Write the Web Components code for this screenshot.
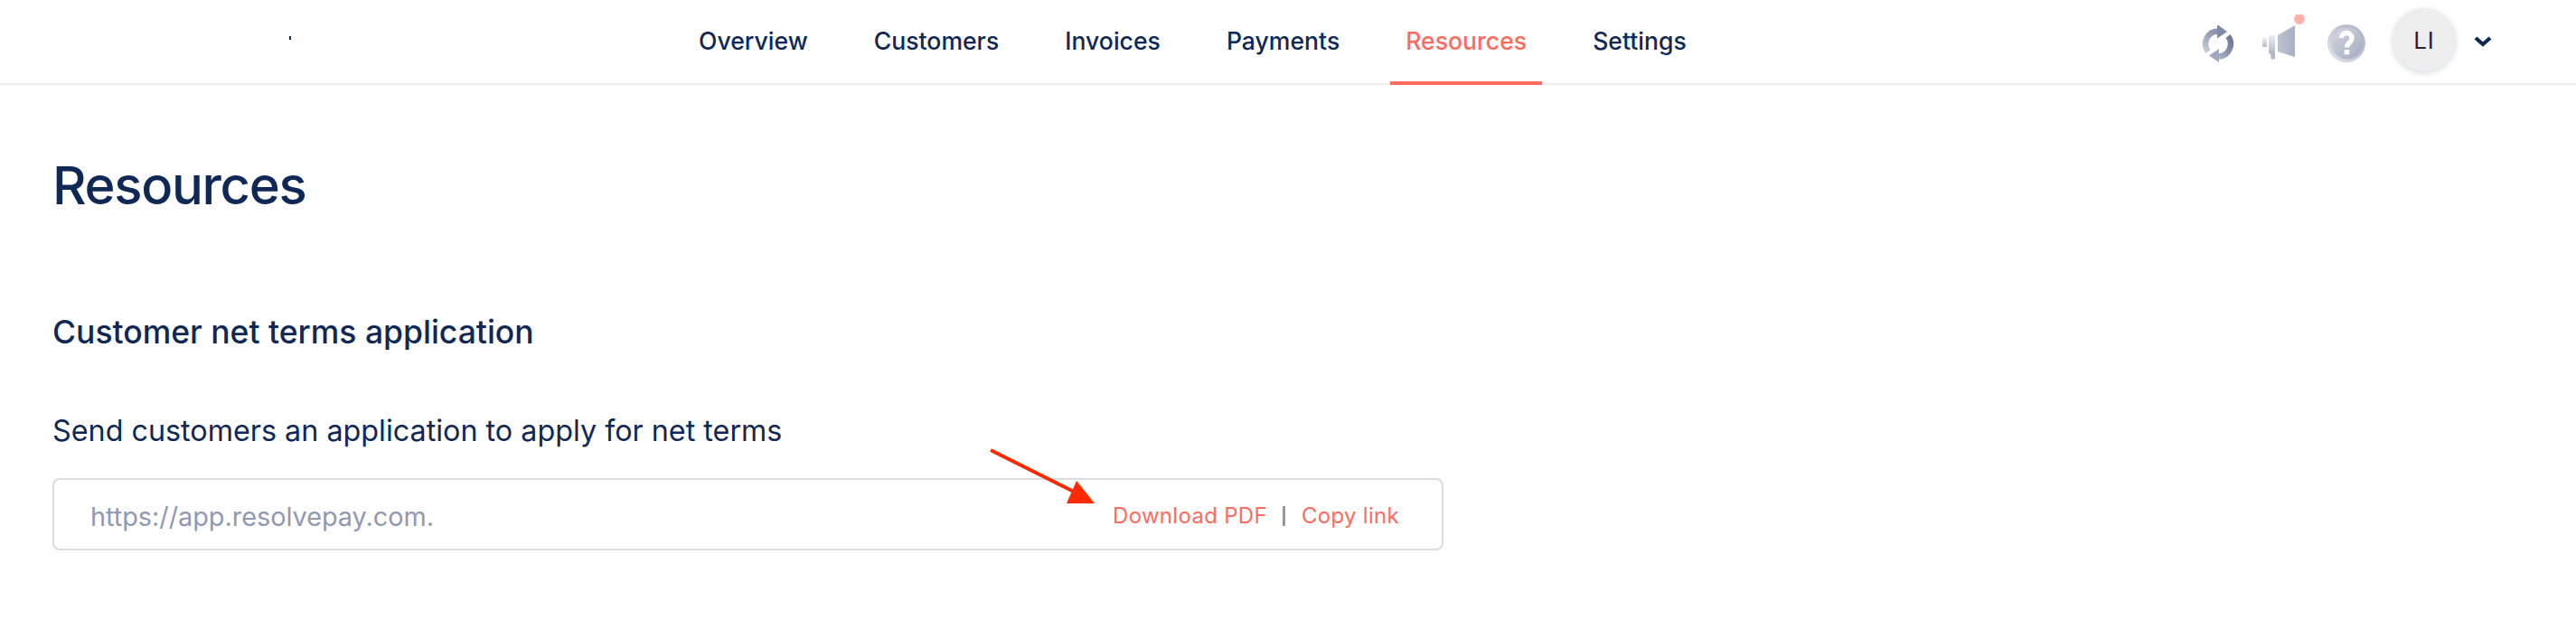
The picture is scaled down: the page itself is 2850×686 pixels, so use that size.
<!DOCTYPE html>
<html>
<head>
<meta charset="utf-8">
<title>Resources</title>
<style>
  html, body { margin: 0; background: #fff; }
  body { font-family: Inter, "Noto Sans", sans-serif; color: #102856; }
</style>
</head>
<body>
<app-shell>
  <top-bar slot="bar">
    <nav-link>Overview</nav-link>
    <nav-link>Customers</nav-link>
    <nav-link>Invoices</nav-link>
    <nav-link>Payments</nav-link>
    <nav-link active>Resources</nav-link>
    <nav-link>Settings</nav-link>
  </top-bar>
  <page-title>Resources</page-title>
  <resource-section heading="Customer net terms application" caption="Send customers an application to apply for net terms">
    <link-field url="https://app.resolvepay.com."></link-field>
  </resource-section>
</app-shell>

<script>
class AppShell extends HTMLElement {
  constructor() {
    super();
    this.attachShadow({mode: 'open'});
    this.shadowRoot.innerHTML = `
      <style>
        :host { display: block; width: 2850px; height: 686px; overflow: hidden; background: #fff; }
        main { padding: 0 58px; }
      </style>
      <slot name="bar"></slot>
      <main><slot></slot></main>`;
  }
}

class TopBar extends HTMLElement {
  constructor() {
    super();
    this.attachShadow({mode: 'open'});
    this.shadowRoot.innerHTML = `
      <style>
        :host { display: flex; height: 92px; border-bottom: 2px solid #eeeef4; position: relative; box-sizing: content-box; }
        .logo { width: 2px; height: 4px; background: #102856; margin: 40px 0 0 320px; flex: none; }
        nav { display: flex; gap: 39px; margin-left: 434px; height: 94px; }
        .tools { display: flex; align-items: center; margin-left: auto; padding-right: 93px; height: 92px; }
        .avatar { width: 70px; height: 70px; border-radius: 50%; background: #eeeeee; box-shadow: 0 2px 6px rgba(40,50,90,.18);
                  display: flex; align-items: center; justify-content: center; font-size: 26px; color: #24223a; margin: -4px 0 0 30px; letter-spacing: 1px; }
        svg { display: block; flex: none; }
      </style>
      <div class="logo"></div>
      <nav><slot></slot></nav>
      <div class="tools">
        <svg width="40" height="42" viewBox="0 0 40 42" style="margin-top:5px">
          <defs>
            <linearGradient id="rfl" x1="0" y1="1" x2="0.4" y2="0"><stop offset="0" stop-color="#c9cdd9"/><stop offset="1" stop-color="#8c96b0"/></linearGradient>
            <linearGradient id="rfr" x1="0.8" y1="0" x2="0" y2="1"><stop offset="0" stop-color="#6d7a9b"/><stop offset="1" stop-color="#a8afc3"/></linearGradient>
          </defs>
          <path d="M8 29 A 14 14 0 0 1 19 6.5" fill="none" stroke="url(#rfl)" stroke-width="6.5"/>
          <path d="M18 -1 L29 7 L18 14.5 Z" fill="#7f8aa7"/>
          <path d="M30 12 A 14 14 0 0 1 20 34.5" fill="none" stroke="url(#rfr)" stroke-width="6.5"/>
          <path d="M20 26 L9 33.5 L20 41 Z" fill="#a1a9be"/>
        </svg>
        <svg width="52" height="56" viewBox="0 0 52 56" style="margin:-4px 0 0 27px">
          <defs>
            <linearGradient id="mg" x1="0" y1="0" x2="1" y2="0"><stop offset="0" stop-color="#bcc1cf"/><stop offset="1" stop-color="#a9b0c3"/></linearGradient>
            <linearGradient id="mg2" x1="0" y1="0" x2="0" y2="1"><stop offset="0" stop-color="#eceef3"/><stop offset="1" stop-color="#b5bac9"/></linearGradient>
          </defs>
          <circle cx="42" cy="5" r="6" fill="#ffb3a8"/>
          <path d="M1 26 H6 V36 H1 Z" fill="url(#mg2)"/>
          <path d="M8 23 H15 V43 H8 Z" fill="url(#mg2)"/>
          <path d="M18 23 L37 12 V47 L18 41 Z" fill="url(#mg)"/>
          <path d="M9 40 L15 41 L15 49 L11 50 Z" fill="#b5bac9"/>
        </svg>
        <svg width="42" height="42" viewBox="0 0 42 42" style="margin:4px 0 0 21px">
          <defs>
            <linearGradient id="hp" x1="1" y1="0" x2="0" y2="1"><stop offset="0" stop-color="#a9afc2"/><stop offset="1" stop-color="#e2e4ea"/></linearGradient>
            <linearGradient id="hp2" x1="0" y1="0" x2="1" y2="1"><stop offset="0" stop-color="#d5d8e2"/><stop offset="1" stop-color="#a3aabf"/></linearGradient>
          </defs>
          <circle cx="21" cy="21" r="21" fill="url(#hp)"/>
          <circle cx="22" cy="21" r="17.5" fill="url(#hp2)"/>
          <path d="M15.5 15 C15.5 7.5 27 8 27 15 C27 20 21.5 20 21.5 25.5" fill="none" stroke="#fff" stroke-width="5.4"/>
          <rect x="18.7" y="28" width="5.6" height="5.2" fill="#fff"/>
        </svg>
        <div class="avatar">LI</div>
        <svg width="20" height="14" viewBox="0 0 20 14" style="margin:0 0 0 20px">
          <path d="M2 3 L10 10 L18 3" fill="none" stroke="#102856" stroke-width="4.2"/>
        </svg>
      </div>`;
  }
}

class NavLink extends HTMLElement {
  constructor() {
    super();
    this.attachShadow({mode: 'open'});
    this.shadowRoot.innerHTML = `
      <style>
        :host { display: flex; align-items: center; height: 90px; padding: 0 17px; border-bottom: 4px solid transparent;
                font-size: 26.6px; font-weight: 500; color: #102856; white-space: nowrap; }
        :host([active]) { color: #ff6b5c; border-bottom-color: #ff6b5c; }
      </style>
      <slot></slot>`;
  }
}

class PageTitle extends HTMLElement {
  constructor() {
    super();
    this.attachShadow({mode: 'open'});
    this.shadowRoot.innerHTML = `
      <style>
        :host { display: block; padding-top: 76px; font-size: 58px; line-height: 70px; font-weight: 500; letter-spacing: -1.3px; color: #102856; }
      </style>
      <slot></slot>`;
  }
}

class ResourceSection extends HTMLElement {
  constructor() {
    super();
    this.attachShadow({mode: 'open'});
    this.shadowRoot.innerHTML = `
      <style>
        :host { display: block; width: 1539px; padding-top: 106px; }
        h2 { margin: 0; font-size: 35.5px; line-height: 44px; font-weight: 500; color: #102856; }
        p { margin: 66px 0 31px; font-size: 32.3px; line-height: 42px; font-weight: 400; color: #102856; }
      </style>
      <h2></h2>
      <p></p>
      <slot></slot>`;
    this.shadowRoot.querySelector('h2').textContent = this.getAttribute('heading');
    this.shadowRoot.querySelector('p').textContent = this.getAttribute('caption');
  }
}

class LinkField extends HTMLElement {
  constructor() {
    super();
    this.attachShadow({mode: 'open'});
    this.shadowRoot.innerHTML = `
      <style>
        :host { display: flex; align-items: center; position: relative; box-sizing: border-box; height: 80px; padding: 0 47px 0 40px;
                border: 2px solid #dcdce4; border-radius: 8px; }
        .url { flex: 1; padding-top: 4px; font-size: 28.8px; color: #8f99b3; }
        .actions { display: flex; align-items: center; padding-top: 3px; font-size: 24px; color: #ff6b5c; letter-spacing: .3px; }
        .sep { width: 3px; height: 22px; background: #8f99b3; margin: 0 18px 0 17px; }
        svg { position: absolute; left: 1034px; top: -36px; }
      </style>
      <span class="url"></span>
      <div class="actions"><span>Download PDF</span><i class="sep"></i><span>Copy link</span></div>
      <svg width="120" height="66" viewBox="0 0 120 66">
        <line x1="2" y1="3" x2="100" y2="52" stroke="#ff2a00" stroke-width="4"/>
        <path d="M97 37 L117 62 L86 62 Z" fill="#ff2a00"/>
      </svg>`;
    this.shadowRoot.querySelector('.url').textContent = this.getAttribute('url');
  }
}

customElements.define('app-shell', AppShell);
customElements.define('top-bar', TopBar);
customElements.define('nav-link', NavLink);
customElements.define('page-title', PageTitle);
customElements.define('resource-section', ResourceSection);
customElements.define('link-field', LinkField);
</script>
</body>
</html>
